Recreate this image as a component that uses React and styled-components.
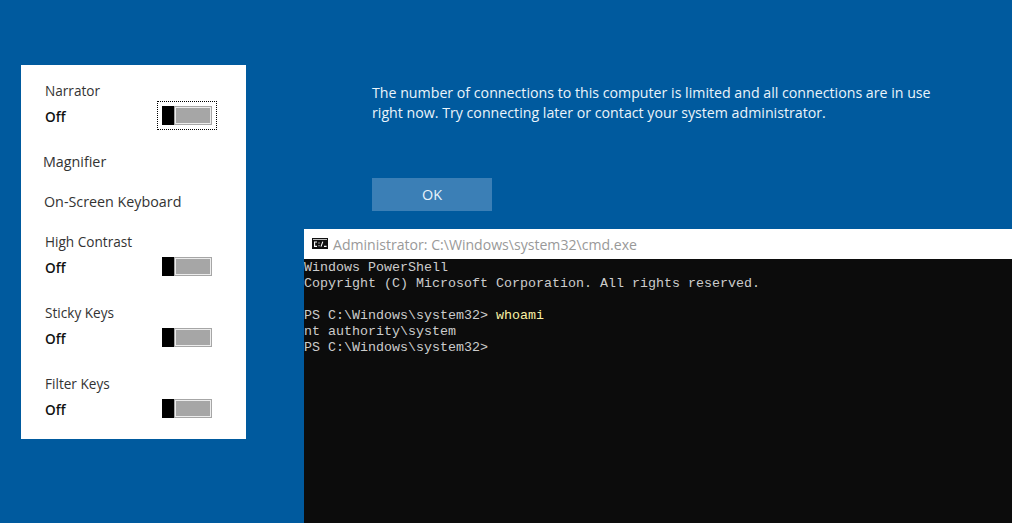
import React from "react";
import styled, { createGlobalStyle } from "styled-components";

const GlobalStyle = createGlobalStyle`
  html, body {
    margin: 0;
    height: 100%;
    background: #005a9e;
  }
`;

const Page = styled.div`
  display: flex;
  align-items: flex-start;
  box-sizing: border-box;
  width: 1012px;
  height: 523px;
  overflow: hidden;
  padding-left: 21px;
  background: #005a9e;
  font-family: "Open Sans", "Noto Sans", sans-serif;
`;

const Panel = styled.div`
  display: flex;
  flex-direction: column;
  flex: 0 0 225px;
  box-sizing: border-box;
  margin-top: 65px;
  padding: 16px 34px 18px 24px;
  background: #fff;
  color: #1a1a1a;
`;

const Item = styled.div`
  margin-bottom: 24px;

  &:last-child {
    margin-bottom: 0;
  }
`;

const Label = styled.div`
  font-size: 13.6px;
  line-height: 20px;
  color: #333;
`;

const LinkLabel = styled(Label)`
  margin-left: ${props => props.$shift}px;
  margin-bottom: 20px;
  font-size: 14.3px;
`;

const StateRow = styled.div`
  display: flex;
  align-items: center;
  justify-content: space-between;
  height: 24px;
  margin-top: 3px;
`;

const StateText = styled.span`
  font-size: 13.6px;
  font-weight: 600;
  color: #111;
`;

const Toggle = styled.div`
  position: relative;
  display: flex;
  width: 50px;
  height: 19px;
  margin-bottom: 1px;
  background: #a6a6a6;

  &::before {
    content: "";
    flex: 0 0 12px;
    background: #000;
  }

  &::after {
    content: "";
    flex: 1;
    margin: 1px;
    border: 1px solid #ececec;
  }
`;

const FocusRing = styled.div`
  position: absolute;
  top: -5px;
  left: -5px;
  right: -5px;
  bottom: -5px;
  border: 1px dotted #000;
`;

const RightColumn = styled.div`
  display: flex;
  flex-direction: column;
  flex: 1;
  height: 100%;
  margin-left: 58px;
`;

const Dialog = styled.div`
  padding: 82.5px 68px 18px;
  color: #eaf4fb;
`;

const Message = styled.p`
  margin: 0;
  width: 575px;
  font-size: 14.2px;
  line-height: 20.5px;
`;

const OkButton = styled.button`
  display: block;
  width: 120px;
  height: 33px;
  margin-top: 54.5px;
  border: 0;
  padding: 0;
  background: #3b7fb6;
  color: #eaf4fb;
  font-family: inherit;
  font-size: 14.4px;
`;

const Console = styled.div`
  display: flex;
  flex-direction: column;
  flex: 1;
`;

const TitleBar = styled.div`
  display: flex;
  align-items: center;
  gap: 5px;
  height: 30px;
  padding-left: 8px;
  background: #fff;
  color: #999;
  font-size: 14.08px;
`;

const ConsoleBody = styled.div`
  flex: 1;
  padding-top: 1px;
  background: #0c0c0c;
  color: #ccc;
  font-family: "Liberation Mono", "DejaVu Sans Mono", monospace;
  font-size: 13.33px;
`;

const Line = styled.div`
  height: 16px;
  line-height: 16px;
  white-space: pre;
`;

const Command = styled.span`
  color: #f9f1a5;
`;

const IconSvg = styled.svg`
  margin-bottom: 1px;
`;

const CmdIcon = () => (
  <IconSvg width="16" height="11" viewBox="0 0 16 11">
    <rect width="16" height="11" fill="#111" />
    <rect x="1" y="1" width="14" height="1" fill="#bbb" />
    <path d="M5 4H2.6v4.4H5M7 4.4v1M7 7.2v1M9 8.6l1.8-5M12 8.4h2.6" fill="none" stroke="#fff" strokeWidth="1.1" />
  </IconSvg>
);

const accessibilityItems = [
  { type: "toggle", name: "Narrator", focused: true },
  { type: "link", name: "Magnifier", shift: -2 },
  { type: "link", name: "On-Screen Keyboard", shift: -1 },
  { type: "toggle", name: "High Contrast" },
  { type: "toggle", name: "Sticky Keys" },
  { type: "toggle", name: "Filter Keys" }
];

const App = () => (
  <Page>
    <GlobalStyle />
    <Panel>
      {accessibilityItems.map(item =>
        item.type === "link" ? (
          <LinkLabel key={item.name} $shift={item.shift}>
            {item.name}
          </LinkLabel>
        ) : (
          <Item key={item.name}>
            <Label>{item.name}</Label>
            <StateRow>
              <StateText>Off</StateText>
              <Toggle>{item.focused && <FocusRing />}</Toggle>
            </StateRow>
          </Item>
        )
      )}
    </Panel>
    <RightColumn>
      <Dialog>
        <Message>
          The number of connections to this computer is limited and all
          connections are in use right now. Try connecting later or contact
          your system administrator.
        </Message>
        <OkButton>OK</OkButton>
      </Dialog>
      <Console>
        <TitleBar>
          <CmdIcon />
          Administrator: C:\Windows\system32\cmd.exe
        </TitleBar>
        <ConsoleBody>
          <Line>Windows PowerShell</Line>
          <Line>Copyright (C) Microsoft Corporation. All rights reserved.</Line>
          <Line />
          <Line>
            {"PS C:\\Windows\\system32> "}
            <Command>whoami</Command>
          </Line>
          <Line>nt authority\system</Line>
          <Line>{"PS C:\\Windows\\system32>"}</Line>
        </ConsoleBody>
      </Console>
    </RightColumn>
  </Page>
);

export default App;
